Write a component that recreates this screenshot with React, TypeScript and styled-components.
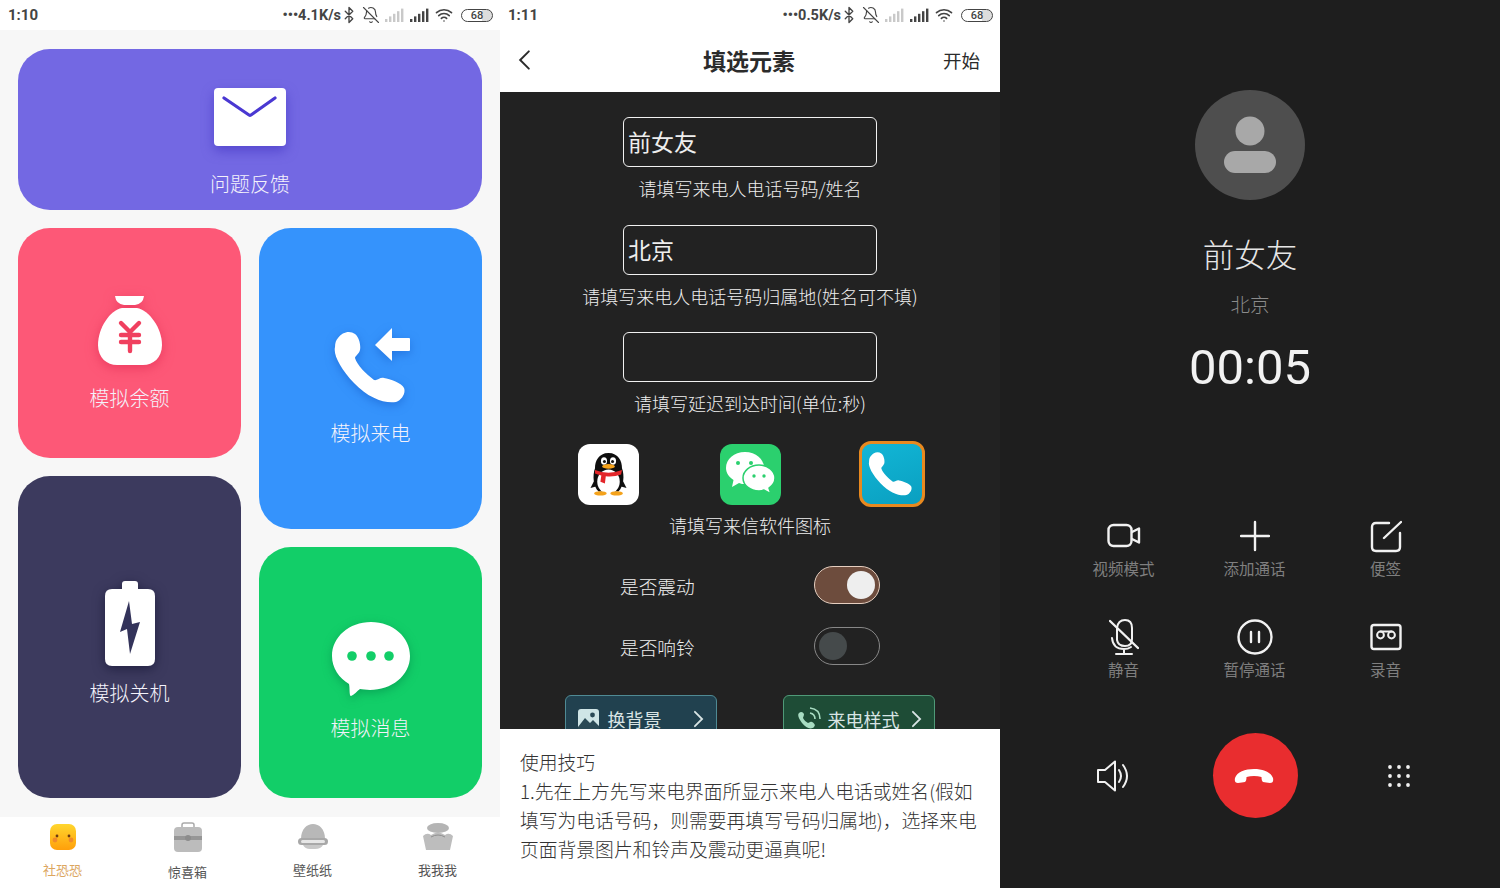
import styled, { createGlobalStyle } from "styled-components";
import { Bluetooth, BellOff, Wifi } from "lucide-react";

const Global = createGlobalStyle`
    html, body {
        margin: 0;
        padding: 0;
        background: #1e1e1e;
    }
    * {
        box-sizing: border-box;
    }
    body {
        font-family: "Noto Sans CJK SC", "Noto Sans", sans-serif;
    }
`;

const Page = styled.div`
    display: flex;
    width: 1500px;
    height: 888px;
    overflow: hidden;
`;

const Panel = styled.section<{ $bg: string }>`
    display: flex;
    flex-direction: column;
    width: 500px;
    height: 888px;
    overflow: hidden;
    background: ${(props) => props.$bg};
`;

/* status bar */
const Status = styled.div`
    display: flex;
    align-items: center;
    flex: none;
    height: 30px;
    padding: 0 7px 0 8px;
    background: #fff;
    color: #444;
`;

const Clock = styled.span`
    font-family: Roboto, sans-serif;
    font-size: 15px;
    font-weight: 700;
`;

const StatusRight = styled.div`
    display: flex;
    align-items: center;
    gap: 5px;
    margin-left: auto;
`;

const Speed = styled.span`
    font-family: Roboto, sans-serif;
    font-size: 14.5px;
    font-weight: 700;
`;

const BatteryPill = styled.span`
    display: flex;
    align-items: center;
    justify-content: center;
    width: 32px;
    height: 13px;
    margin-left: 3px;
    border: 1.5px solid #444;
    border-radius: 7px;
    font-family: Roboto, sans-serif;
    font-size: 11px;
    font-weight: 500;
    background: linear-gradient(90deg, #fff 68%, #ddd 68%);
`;

function Bars({ faded }: { faded?: boolean }) {
    const color = faded ? "#c9c9c9" : "#444";
    return (
        <svg width="20" height="14" viewBox="0 0 20 14">
            {[0, 1, 2, 3, 4].map((i) => (
                <rect key={i} x={i * 4} y={11 - i * 2.6} width="2.4" height={3 + i * 2.6} fill={color} />
            ))}
        </svg>
    );
}

function StatusBar({ time, speed }: { time: string; speed: string }) {
    return (
        <Status>
            <Clock>{time}</Clock>
            <StatusRight>
                <Speed>•••{speed}</Speed>
                <Bluetooth size={18} strokeWidth={1.8} style={{ margin: "0 -2px 0 -6px" }} />
                <BellOff size={18} strokeWidth={1.5} style={{ marginLeft: 1 }} />
                <Bars faded />
                <Bars />
                <Wifi size={18} strokeWidth={2.2} />
                <BatteryPill>68</BatteryPill>
            </StatusRight>
        </Status>
    );
}

/* left panel */
const Board = styled.div`
    display: flex;
    flex-direction: column;
    gap: 18px;
    flex: 1;
    padding: 19px 18px;
    background: #f7f7f7;
`;

const Columns = styled.div`
    display: flex;
    gap: 18px;
`;

const Column = styled.div`
    display: flex;
    flex-direction: column;
    gap: 18px;
    width: 223px;
`;

const Card = styled.div<{ $bg: string; $h: number; $top: number }>`
    display: flex;
    flex-direction: column;
    align-items: center;
    flex: none;
    height: ${(props) => props.$h}px;
    padding-top: ${(props) => props.$top}px;
    border-radius: 32px;
    background: ${(props) => props.$bg};
`;

const CardLabel = styled.div<{ $gap: number }>`
    margin-top: ${(props) => props.$gap}px;
    color: #f4f2fb;
    font-size: 20px;
    line-height: 28px;
    font-weight: 300;
`;

const TabBar = styled.nav`
    display: grid;
    grid-template-columns: repeat(4, 125px);
    flex: none;
    height: 71px;
    background: #fff;
`;

const Tab = styled.div<{ $active?: boolean; $labelTop: number }>`
    display: flex;
    flex-direction: column;
    align-items: center;
    padding-top: 3px;
    color: ${(props) => (props.$active ? "#dca65f" : "#555")};
    font-size: 13px;
    line-height: 18px;
    span {
        margin-top: ${(props) => props.$labelTop}px;
    }
`;

/* middle panel */
const TitleBar = styled.header`
    display: grid;
    grid-template-columns: 1fr auto 1fr;
    align-items: center;
    flex: none;
    height: 62px;
    padding: 0 20px 3px 18px;
    background: #fff;
    color: #2b2b2b;
`;

const Title = styled.h1`
    margin: 0;
    font-size: 23px;
    font-weight: 700;
`;

const Start = styled.span`
    justify-self: end;
    font-size: 18.5px;
`;

const Form = styled.div`
    display: flex;
    flex-direction: column;
    align-items: center;
    flex: none;
    height: 637px;
    overflow: hidden;
    padding-top: 25px;
    background: #222;
    color: #eee;
`;

const Field = styled.div`
    display: flex;
    align-items: center;
    flex: none;
    width: 254px;
    height: 50px;
    padding: 0 0 2px 4px;
    border: 1.5px solid #f1f1f1;
    border-radius: 6px;
    font-size: 23px;
`;

const Hint = styled.div<{ $after: number; $before?: number }>`
    height: 26px;
    margin: ${(props) => props.$before ?? 8}px 0 ${(props) => props.$after}px;
    font-size: 18px;
    line-height: 26px;
    font-weight: 300;
    white-space: nowrap;
`;

const AppIcons = styled.div`
    display: grid;
    grid-template-columns: 61px 61px 66px;
    column-gap: 81px;
    align-items: center;
    height: 66px;
    margin: -8px 0 0 6px;
`;

const AppTile = styled.div<{ $bg: string; $selected?: boolean }>`
    display: flex;
    align-items: center;
    justify-content: center;
    width: ${(props) => (props.$selected ? 66 : 61)}px;
    height: ${(props) => (props.$selected ? 66 : 61)}px;
    margin-left: ${(props) => (props.$selected ? -3 : 0)}px;
    border: ${(props) => (props.$selected ? "3px solid #e8891f" : "none")};
    border-radius: 12px;
    background: ${(props) => props.$bg};
`;

const SwitchRow = styled.div`
    display: flex;
    align-items: center;
    justify-content: space-between;
    flex: none;
    width: 260px;
    height: 38px;
    margin-bottom: 23px;
    font-size: 18.7px;
    font-weight: 300;
`;

const Toggle = styled.div<{ $on?: boolean }>`
    display: flex;
    align-items: center;
    justify-content: ${(props) => (props.$on ? "flex-end" : "flex-start")};
    width: 66px;
    height: 38px;
    padding: 0 4px;
    border: 1.5px solid ${(props) => (props.$on ? "#e6cfc0" : "#888")};
    border-radius: 19px;
    background: ${(props) => (props.$on ? "#6d4c3d" : "#222")};
    i {
        display: block;
        width: 28px;
        height: 28px;
        border-radius: 50%;
        background: ${(props) => (props.$on ? "#eee" : "#454a4b")};
    }
`;

const Actions = styled.div`
    display: grid;
    grid-template-columns: 152px 152px;
    column-gap: 66px;
    margin: 7px 0 0 -1px;
`;

const ActionButton = styled.div<{ $bg: string; $line: string }>`
    display: flex;
    align-items: center;
    flex: none;
    height: 48px;
    padding: 0 12px;
    border: 1px solid ${(props) => props.$line};
    border-radius: 6px;
    background: ${(props) => props.$bg};
    color: #d8e4e4;
    font-size: 18px;
    svg:last-child {
        margin-left: auto;
    }
`;

const Tips = styled.div`
    flex: 1;
    padding: 18px 20px 0;
    background: #fff;
    color: #333;
    font-size: 18.8px;
    line-height: 29px;
    font-weight: 300;
`;

/* call panel */
const Call = styled.div`
    display: flex;
    flex-direction: column;
    align-items: center;
    flex: 1;
    padding-top: 90px;
`;

const Avatar = styled.div`
    display: flex;
    align-items: center;
    justify-content: center;
    flex: none;
    width: 110px;
    height: 110px;
    border-radius: 50%;
    background: #4e4e4e;
`;

const Caller = styled.div`
    margin-top: 30px;
    color: #e6e6e6;
    font-size: 31.5px;
    line-height: 46px;
    font-weight: 300;
`;

const Place = styled.div`
    margin-top: 15px;
    color: #8b8b8b;
    font-size: 19.5px;
    line-height: 26px;
    font-weight: 300;
`;

const Timer = styled.div`
    margin-top: 22px;
    color: #f2f2f2;
    font-family: Roboto, sans-serif;
    font-size: 49px;
    line-height: 58px;
`;

const Controls = styled.div`
    display: grid;
    grid-template-columns: repeat(3, 131px);
    grid-auto-rows: 101px;
    width: 100%;
    margin-top: 120px;
    padding-left: 58px;
`;

const Control = styled.div`
    display: flex;
    flex-direction: column;
    align-items: center;
    color: #7f7f7f;
    font-size: 15.5px;
    line-height: 22px;
    svg {
        display: block;
        height: 38px;
    }
    span {
        margin-top: 2px;
    }
`;

const CallBar = styled.div`
    display: grid;
    grid-template-columns: repeat(3, 143px);
    justify-items: center;
    align-items: center;
    width: 100%;
    margin-top: 14px;
    padding-left: 41px;
`;

const HangUp = styled.div`
    display: flex;
    align-items: center;
    justify-content: center;
    width: 85px;
    height: 85px;
    border-radius: 50%;
    background: #e92d2f;
`;

function Mail() {
    return (
        <svg width="74" height="60" viewBox="0 0 74 60" style={{ filter: "drop-shadow(0 5px 6px rgba(60,45,190,.55))" }}>
            <rect x="1" y="1" width="72" height="58" rx="4" fill="#fff" />
            <path d="M11 11 L36 28 Q37 28.6 38 28 L62 11" fill="none" stroke="#4a38d2" strokeWidth="3.2" strokeLinecap="round" />
        </svg>
    );
}

function MoneyBag() {
    return (
        <svg width="66" height="70" viewBox="0 0 66 70" style={{ filter: "drop-shadow(0 3px 6px rgba(225,40,80,.6))" }}>
            <path d="M18 0 H47 Q46 8 38 9 H27 Q19 8 18 0Z" fill="#fff" />
            <path d="M25 12 H40 C52 14 65 32 65 49 C65 62 56 69 46 69 H20 C10 69 1 62 1 49 C1 32 13 14 25 12Z" fill="#fff" />
            <path d="M24 27 L33 36 L42 27 M33 36 V55 M24 39 H42 M24 46 H42" fill="none" stroke="#f0405f" strokeWidth="4.4" strokeLinecap="round" />
        </svg>
    );
}

function IncomingCall() {
    return (
        <svg width="85" height="85" viewBox="0 0 85 85" style={{ marginLeft: 4, filter: "drop-shadow(0 3px 5px rgba(20,90,200,.5))" }}>
            <path d="M8 13 C12 7 20 5 25 9 C29 12 31 20 30 25 C29 29 25 31 25 33 C27 40 36 49 44 55 C47 56 50 52 54 53 C60 54 72 58 74 63 C76 68 72 75 66 77 C55 79 38 73 24 58 C11 44 3 30 5 22 C5 18 6 15 8 13Z" fill="#fff" />
            <path d="M45 20 L62 3 V13 H79 Q80 13 80 14 V25 Q80 26 79 26 H62 V36Z" fill="#fff" />
        </svg>
    );
}

function Battery() {
    return (
        <svg width="50" height="86" viewBox="0 0 50 86" style={{ filter: "drop-shadow(0 3px 6px rgba(15,15,45,.6))" }}>
            <path d="M17 3 Q17 0 20 0 H30 Q33 0 33 3 V8 H43 Q50 8 50 15 V78 Q50 85 43 85 H7 Q0 85 0 78 V15 Q0 8 7 8 H17Z" fill="#fff" />
            <path d="M24 20 L15 51 L22 48 L25 73 L35 41 L27 43Z" fill="#33335a" />
        </svg>
    );
}

function Bubble() {
    return (
        <svg width="78" height="75" viewBox="0 0 78 75" style={{ filter: "drop-shadow(0 3px 5px rgba(0,130,70,.5))" }}>
            <path d="M39 0 C61 0 78 15 78 34 C78 54 59 68 38 68 C34 68 30 67 28 67 C25 69 22 73 19 74 C17 74 18 66 17 62 C7 56 0 46 0 34 C0 15 17 0 39 0Z" fill="#fff" />
            <circle cx="20" cy="34" r="4.8" fill="#12ce68" />
            <circle cx="39" cy="34" r="4.8" fill="#12ce68" />
            <circle cx="57" cy="34" r="4.8" fill="#12ce68" />
        </svg>
    );
}

function Face() {
    return (
        <svg width="30" height="34" viewBox="0 0 30 34">
            <defs>
                <linearGradient id="faceFill" x1="0" y1="0" x2="0" y2="1">
                    <stop offset="0" stopColor="#ffd62e" />
                    <stop offset="1" stopColor="#ff9f0a" />
                </linearGradient>
            </defs>
            <rect x="2" y="4" width="26" height="26" rx="7" fill="url(#faceFill)" />
            <circle cx="9" cy="16" r="1.4" fill="#6b3a12" />
            <circle cx="21" cy="16" r="1.4" fill="#6b3a12" />
            <circle cx="7" cy="20" r="2.4" fill="#f08a2a" />
            <circle cx="23" cy="20" r="2.4" fill="#f08a2a" />
        </svg>
    );
}

function Case() {
    return (
        <svg width="30" height="34" viewBox="0 0 30 34">
            <path d="M9 7 V5 Q9 3 11 3 H19 Q21 3 21 5 V7" fill="none" stroke="#aaa" strokeWidth="1.5" />
            <rect x="1" y="7" width="28" height="25" rx="4" fill="#bcbcbc" />
            <rect x="1" y="16" width="28" height="4" fill="#969696" />
            <circle cx="15" cy="18" r="3" fill="#8c8c8c" />
        </svg>
    );
}

function Hat() {
    return (
        <svg width="32" height="34" viewBox="0 0 32 34">
            <path d="M4 19 C4 9 10 4 16 4 C22 4 28 9 28 19Z" fill="#b8b8b8" />
            <rect x="1" y="18" width="30" height="7" rx="3.5" fill="#a8a8a8" />
            <rect x="4" y="20" width="24" height="3" rx="1.5" fill="#e6e6e6" />
            <path d="M6 25 H26 Q24 29 18 29 H13 Q8 29 6 25Z" fill="#c8c8c8" />
        </svg>
    );
}

function Sofa() {
    return (
        <svg width="32" height="34" viewBox="0 0 32 34">
            <ellipse cx="16" cy="8" rx="11" ry="5" fill="#b4b4b4" />
            <path d="M1 16 Q5 12 9 15 Q16 10 23 15 Q27 12 31 16 L28 30 H4Z" fill="#bdbdbd" />
            <path d="M9 17 Q16 13 23 17" fill="none" stroke="#8f8f8f" strokeWidth="1" />
        </svg>
    );
}

function Penguin() {
    return (
        <svg width="37" height="45" viewBox="0 0 40 50">
            <path d="M6 28 L0 40 L7 38Z M34 28 L40 40 L33 38Z" fill="#111" />
            <path d="M20 1 C31 1 35 10 35 18 C38 26 37 38 31 44 H9 C3 38 2 26 5 18 C5 10 9 1 20 1Z" fill="#0e0e0e" />
            <ellipse cx="20" cy="33" rx="12.5" ry="13.5" fill="#fff" />
            <ellipse cx="15" cy="10" rx="3.4" ry="4.2" fill="#fff" />
            <ellipse cx="25" cy="10" rx="3.4" ry="4.2" fill="#fff" />
            <circle cx="15.5" cy="10.5" r="1.7" fill="#111" />
            <circle cx="24.5" cy="10.5" r="1.7" fill="#111" />
            <ellipse cx="20" cy="16" rx="7" ry="2.6" fill="#f4a21b" />
            <path d="M5 20 Q20 26 35 20 L34 25 Q26 28 17 27 L16 35 L11 33 L12 26 Q8 25 5 24Z" fill="#e3262a" />
            <ellipse cx="11" cy="46" rx="7" ry="2.4" fill="#f4a21b" />
            <ellipse cx="29" cy="46" rx="7" ry="2.4" fill="#f4a21b" />
        </svg>
    );
}

function WeChat() {
    return (
        <svg width="49" height="44" viewBox="0 0 49 44">
            <path d="M19 0 C30 0 38 7 38 16 C38 25 30 32 19 32 C17 32 15 32 13 31 L6 35 L7.5 28 C3 25 0 21 0 16 C0 7 8 0 19 0Z" fill="#fff" />
            <path d="M33 13 C42 13 49 19 49 26 C49 31 46 34 43 36 L45 42 L38 38 C36 39 35 39 33 39 C24 39 17 33 17 26 C17 19 24 13 33 13Z" fill="#fff" stroke="#2bd06e" strokeWidth="1.5" />
            <circle cx="12" cy="11" r="2" fill="#2bd06e" />
            <circle cx="25" cy="11" r="2" fill="#2bd06e" />
            <circle cx="28" cy="24" r="1.7" fill="#2bd06e" />
            <circle cx="38" cy="24" r="1.7" fill="#2bd06e" />
        </svg>
    );
}

function TilePhone() {
    return (
        <svg width="52" height="52" viewBox="0 0 85 85">
            <path d="M8 13 C12 7 20 5 25 9 C29 12 31 20 30 25 C29 29 25 31 25 33 C27 40 36 49 44 55 C47 56 50 52 54 53 C60 54 72 58 74 63 C76 68 72 75 66 77 C55 79 38 73 24 58 C11 44 3 30 5 22 C5 18 6 15 8 13Z" fill="#fff" />
        </svg>
    );
}

function Chevron() {
    return (
        <svg width="11" height="18" viewBox="0 0 12 20">
            <path d="M2 2 L10 10 L2 18" fill="none" stroke="currentColor" strokeWidth="2" strokeLinecap="round" />
        </svg>
    );
}

function BackArrow() {
    return (
        <svg width="13" height="22" viewBox="0 0 12 20">
            <path d="M10 2 L2 10 L10 18" fill="none" stroke="#2b2b2b" strokeWidth="1.8" strokeLinecap="round" />
        </svg>
    );
}

function PictureIcon() {
    return (
        <svg width="21" height="21" viewBox="0 0 21 21" style={{ marginRight: 9 }}>
            <rect width="21" height="21" rx="3" fill="#cfe5e6" />
            <circle cx="14.5" cy="6" r="2.4" fill="#2b4a56" />
            <path d="M0 18 L7 9 L12 14 L15 11 L21 17 V21 H0Z" fill="#2b4a56" />
        </svg>
    );
}

function RingIcon() {
    return (
        <svg width="26" height="24" viewBox="0 0 26 24" style={{ marginRight: 6 }}>
            <path d="M3 6 C5 4 7 5 8 7 C8 9 7 10 7 11 C8 13 10 15 12 16 C13 16 14 14 16 15 C18 16 20 18 18 20 C15 23 10 21 6 16 C3 12 1 8 3 6Z" fill="#a8dcc2" />
            <path d="M14 6 Q19 7 19 12 M14 1 Q24 2 24 12" fill="none" stroke="#a8dcc2" strokeWidth="1.6" />
        </svg>
    );
}

function Person() {
    return (
        <svg width="54" height="58" viewBox="0 0 54 58">
            <circle cx="27" cy="15" r="14.5" fill="#a8a8a8" />
            <rect x="1" y="35" width="52" height="22" rx="11" fill="#a8a8a8" />
        </svg>
    );
}

const line = { fill: "none", stroke: "#f1f1f1", strokeWidth: 2.4, strokeLinecap: "round", strokeLinejoin: "round" } as const;

function VideoIcon() {
    return (
        <svg width="34" height="38" viewBox="0 0 34 38">
            <rect x="1.5" y="8" width="23" height="21" rx="5" {...line} />
            <path d="M25 15 L32 11.5 V25.5 L25 22" {...line} />
        </svg>
    );
}

function PlusIcon() {
    return (
        <svg width="30" height="38" viewBox="0 0 30 38">
            <path d="M15 5 V33 M1 19 H29" {...line} />
        </svg>
    );
}

function NoteIcon() {
    return (
        <svg width="32" height="38" viewBox="0 0 32 38">
            <path d="M19 6 H6 Q2 6 2 10 V30 Q2 34 6 34 H26 Q30 34 30 30 V16" {...line} />
            <path d="M14 21 L31 5" {...line} />
        </svg>
    );
}

function MicOffIcon() {
    return (
        <svg width="30" height="38" viewBox="0 0 30 38">
            <path d="M8 10 Q9 2 16 2 Q23 2 23 10 V21 Q23 28 16 28 Q9 28 8 22Z" {...line} strokeWidth={2} />
            <path d="M3 20 Q4 31 15 31 Q19 31 22 29 M15 31 V36 M7 36 H23" {...line} strokeWidth={2} />
            <path d="M1 3 L29 30" {...line} />
        </svg>
    );
}

function PauseIcon() {
    return (
        <svg width="36" height="38" viewBox="0 0 36 38">
            <circle cx="18" cy="19" r="16.5" {...line} />
            <path d="M14 14 V24 M22 14 V24" {...line} />
        </svg>
    );
}

function TapeIcon() {
    return (
        <svg width="32" height="38" viewBox="0 0 32 38">
            <rect x="1.5" y="7" width="29" height="24" rx="2.5" {...line} />
            <circle cx="10.5" cy="17" r="3.4" {...line} strokeWidth={2} />
            <circle cx="21.5" cy="17" r="3.4" {...line} strokeWidth={2} />
            <path d="M10.5 13.6 H21.5" {...line} strokeWidth={2} />
        </svg>
    );
}

function SpeakerIcon() {
    return (
        <svg width="34" height="34" viewBox="0 0 34 34">
            <path d="M2 11 H9 L19 2.5 V31.5 L9 23 H2Z" fill="none" stroke="#f1f1f1" strokeWidth="2" strokeLinejoin="round" />
            <path d="M23 11 Q27 17 23 23 M27 6 Q35 17 27 28" fill="none" stroke="#f1f1f1" strokeWidth="2" strokeLinecap="round" />
        </svg>
    );
}

function HangUpIcon() {
    return (
        <svg width="40" height="16" viewBox="0 0 40 16" style={{ marginLeft: -4 }}>
            <path d="M1 10 C3 4 11 1 20 1 C29 1 37 4 39 10 Q40 15 36 15 Q32 14.5 29 14 Q27.5 13 27.5 9 Q24 8 20 8 Q16 8 12.5 9 Q12.5 13 11 14 Q8 14.5 4 15 Q0 15 1 10Z" fill="#fff" />
        </svg>
    );
}

function DialIcon() {
    const spots = [0, 1, 2];
    return (
        <svg width="22" height="22" viewBox="0 0 22 22">
            {spots.map((r) =>
                spots.map((c) => <circle key={`${r}${c}`} cx={2 + c * 9} cy={2 + r * 9} r="1.9" fill="#f1f1f1" />)
            )}
        </svg>
    );
}

export default function App() {
    return (
        <Page>
            <Global />
            <Panel $bg="#f7f7f7">
                <StatusBar time="1:10" speed="4.1K/s" />
                <Board>
                    <Card $bg="#7368e3" $h={161} $top={38}>
                        <Mail />
                        <CardLabel $gap={23}>问题反馈</CardLabel>
                    </Card>
                    <Columns>
                        <Column>
                            <Card $bg="#fd5877" $h={230} $top={68}>
                                <MoneyBag />
                                <CardLabel $gap={18}>模拟余额</CardLabel>
                            </Card>
                            <Card $bg="#3c3a5e" $h={322} $top={105}>
                                <Battery />
                                <CardLabel $gap={12}>模拟关机</CardLabel>
                            </Card>
                        </Column>
                        <Column>
                            <Card $bg="#3593fc" $h={301} $top={97}>
                                <IncomingCall />
                                <CardLabel $gap={9}>模拟来电</CardLabel>
                            </Card>
                            <Card $bg="#12ce68" $h={251} $top={75}>
                                <Bubble />
                                <CardLabel $gap={17}>模拟消息</CardLabel>
                            </Card>
                        </Column>
                    </Columns>
                </Board>
                <TabBar>
                    <Tab $active $labelTop={7}>
                        <Face />
                        <span>社恐恐</span>
                    </Tab>
                    <Tab $labelTop={9}>
                        <Case />
                        <span>惊喜箱</span>
                    </Tab>
                    <Tab $labelTop={7}>
                        <Hat />
                        <span>壁纸纸</span>
                    </Tab>
                    <Tab $labelTop={7}>
                        <Sofa />
                        <span>我我我</span>
                    </Tab>
                </TabBar>
            </Panel>

            <Panel $bg="#222">
                <StatusBar time="1:11" speed="0.5K/s" />
                <TitleBar>
                    <BackArrow />
                    <Title>填选元素</Title>
                    <Start>开始</Start>
                </TitleBar>
                <Form>
                    <Field>前女友</Field>
                    <Hint $after={24}>请填写来电人电话号码/姓名</Hint>
                    <Field>北京</Field>
                    <Hint $after={23}>请填写来电人电话号码归属地(姓名可不填)</Hint>
                    <Field />
                    <Hint $after={33}>请填写延迟到达时间(单位:秒)</Hint>
                    <AppIcons>
                        <AppTile $bg="#fff">
                            <Penguin />
                        </AppTile>
                        <AppTile $bg="#2bd06e">
                            <WeChat />
                        </AppTile>
                        <AppTile $bg="linear-gradient(160deg,#12b6d6,#0a9fc0)" $selected>
                            <TilePhone />
                        </AppTile>
                    </AppIcons>
                    <Hint $before={5} $after={28}>请填写来信软件图标</Hint>
                    <SwitchRow>
                        是否震动
                        <Toggle $on>
                            <i />
                        </Toggle>
                    </SwitchRow>
                    <SwitchRow>
                        是否响铃
                        <Toggle>
                            <i />
                        </Toggle>
                    </SwitchRow>
                    <Actions>
                        <ActionButton $bg="#21414f" $line="#4f8a94">
                            <PictureIcon />
                            换背景
                            <Chevron />
                        </ActionButton>
                        <ActionButton $bg="#1e4c36" $line="#4f9a78">
                            <RingIcon />
                            来电样式
                            <Chevron />
                        </ActionButton>
                    </Actions>
                </Form>
                <Tips>
                    使用技巧
                    <br />
                    1.先在上方先写来电界面所显示来电人电话或姓名(假如填写为电话号码，则需要再填写号码归属地)，选择来电页面背景图片和铃声及震动更逼真呢!
                </Tips>
            </Panel>

            <Panel $bg="#1e1e1e">
                <Call>
                    <Avatar>
                        <Person />
                    </Avatar>
                    <Caller>前女友</Caller>
                    <Place>北京</Place>
                    <Timer>00:05</Timer>
                    <Controls>
                        <Control>
                            <VideoIcon />
                            <span>视频模式</span>
                        </Control>
                        <Control>
                            <PlusIcon />
                            <span>添加通话</span>
                        </Control>
                        <Control>
                            <NoteIcon />
                            <span>便签</span>
                        </Control>
                        <Control>
                            <MicOffIcon />
                            <span>静音</span>
                        </Control>
                        <Control>
                            <PauseIcon />
                            <span>暂停通话</span>
                        </Control>
                        <Control>
                            <TapeIcon />
                            <span>录音</span>
                        </Control>
                    </Controls>
                    <CallBar>
                        <SpeakerIcon />
                        <HangUp>
                            <HangUpIcon />
                        </HangUp>
                        <DialIcon />
                    </CallBar>
                </Call>
            </Panel>
        </Page>
    );
}
